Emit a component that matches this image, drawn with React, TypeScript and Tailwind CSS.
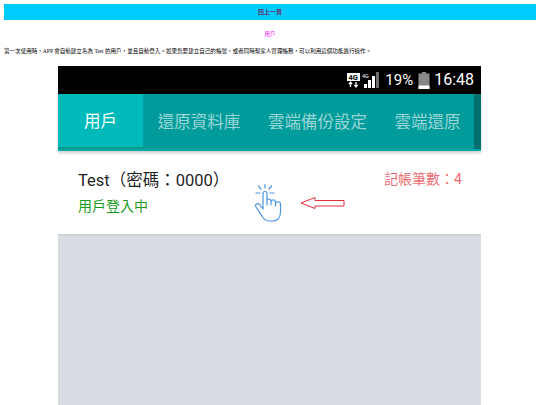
export default function App() {
  const f = { fontFamily: '"Liberation Serif","Noto Sans CJK TC",serif' };
  const s = { fontFamily: 'Roboto,"Noto Sans CJK TC",sans-serif' };
  return (
    <div className="h-[405px] w-[540px] overflow-hidden bg-white flex flex-col" style={f}>
      <div className="mx-[4px] mt-[4px] h-[16px] shrink-0 bg-[#00ccff] flex items-center justify-center text-[6px] font-bold text-[#663366]">回上一頁</div>
      <div className="mt-[10px] h-[8px] shrink-0 text-center text-[5.5px] leading-[8px] text-[#ff00ff]">用戶</div>
      <div className="mt-[9px] h-[8px] shrink-0 pl-[4px] text-[5.55px] leading-[8px] text-black">第一次使用時，APP 會自動建立名為 Test 的用戶，並且自動登入。如果您要建立自己的帳號，或者同時幫家人管理帳務，可以利用這個功能進行操作。</div>
      <div className="mt-[11px] ml-[58px] w-[423px] flex-1 flex flex-col bg-[#d8dce3]" style={s}>
        <div className="h-[28px] shrink-0 bg-black flex items-center justify-end pr-[7px] text-white">
          <svg width="34" height="18" viewBox="0 0 34 18" className="mr-[4px]">
            <rect x="0" y="2" width="13" height="8" fill="#fff" />
            <text x="1.500" y="9" fontSize="7.500" fontWeight="700" fill="#000">4G</text>
            <path d="M3.500 11v5M1.800 13.200 3.500 11l1.700 2.200M9 16v-5M7.300 13.800 9 16l1.700-2.200" stroke="#fff" strokeWidth="1.300" fill="none" />
            <text x="15" y="7" fontSize="5.500" fill="#fff">4G</text>
            <rect x="17" y="13" width="3" height="4" fill="#fff" />
            <rect x="21" y="9" width="3" height="8" fill="#fff" />
            <rect x="25" y="5" width="3" height="12" fill="#fff" />
            <rect x="29" y="1" width="3" height="16" fill="#6f6f6f" />
          </svg>
          <span className="text-[15px] leading-none mr-[5px]">19%</span>
          <svg width="12" height="17" viewBox="0 0 12 17" className="mr-[4px]">
            <rect x="4" y="0" width="4" height="2" fill="#888" />
            <rect x="0.500" y="1.500" width="11" height="15.500" fill="#888" />
            <rect x="0.500" y="13.500" width="11" height="3.500" fill="#fff" />
          </svg>
          <span className="text-[16px] leading-none">16:48</span>
        </div>
        <div className="h-[57px] shrink-0 bg-[#009b9b] flex text-[16.500px] text-[#9bd6d6] border-b-[2px] border-[#00a8a8] shadow-[0_2px_3px_rgba(0,0,0,0.2)] relative z-10">
          <div className="w-[85px] h-[55px] bg-[#00b9b9] text-white flex items-center justify-center pt-[3px] border-b-[2px] border-[#009b8b]">用戶</div>
          <div className="w-[111px] flex items-center justify-center pl-[1px] pt-[3px]">還原資料庫</div>
          <div className="w-[127px] flex items-center justify-center pt-[3px]">雲端備份設定</div>
          <div className="w-[93px] flex items-center justify-center pt-[3px]">雲端還原</div>
          <div className="w-[7px] bg-[#00716f]" />
        </div>
        <div className="h-[85px] shrink-0 bg-white border-b-[2px] border-[#cfd2d6] flex pl-[20px] pr-[19px] relative">
          <div className="flex flex-col pt-[18px]">
            <div className="text-[16.500px] leading-[24px] text-[#1f1f1f]">Test（密碼：0000）</div>
            <div className="text-[14px] leading-[20px] mt-[3px] text-[#169b16]">用戶登入中</div>
          </div>
          <div className="ml-auto pt-[18px] text-[14px] leading-[20px] text-[#ef6a70]">記帳筆數：4</div>
          <svg width="38" height="44" viewBox="0 0 38 44" fill="none" className="absolute left-[192px] top-[31px]" stroke="#4a94e0" strokeWidth="1.200" strokeLinecap="round" strokeLinejoin="round">
            <path d="M15 2.500V6M8.500 4 11 7M21.500 4 19 7M6 11h4M20 11h4" />
            <path d="M13 27V11.500a2 2 0 0 1 4 0V23M17 19a2 2 0 0 1 4 0v4M21 20a2.200 2.200 0 0 1 4.500 .5V24M25.500 22a2.500 2.500 0 0 1 5 .5V30c0 6-3.500 9-8 9h-3c-3 0-5-1.500-6.500-3.500L6 25c-1.500-2.500 1.500-4.500 3.500-2.500L13 27" />
          </svg>
          <svg width="46" height="14" viewBox="0 0 46 14" fill="#fff" className="absolute left-[242px] top-[45px]" stroke="#e0303c" strokeWidth="1">
            <path d="M1 7 15 1.500V4.500H44V10H15v2.500Z" />
          </svg>
        </div>
      </div>
    </div>
  );
}
